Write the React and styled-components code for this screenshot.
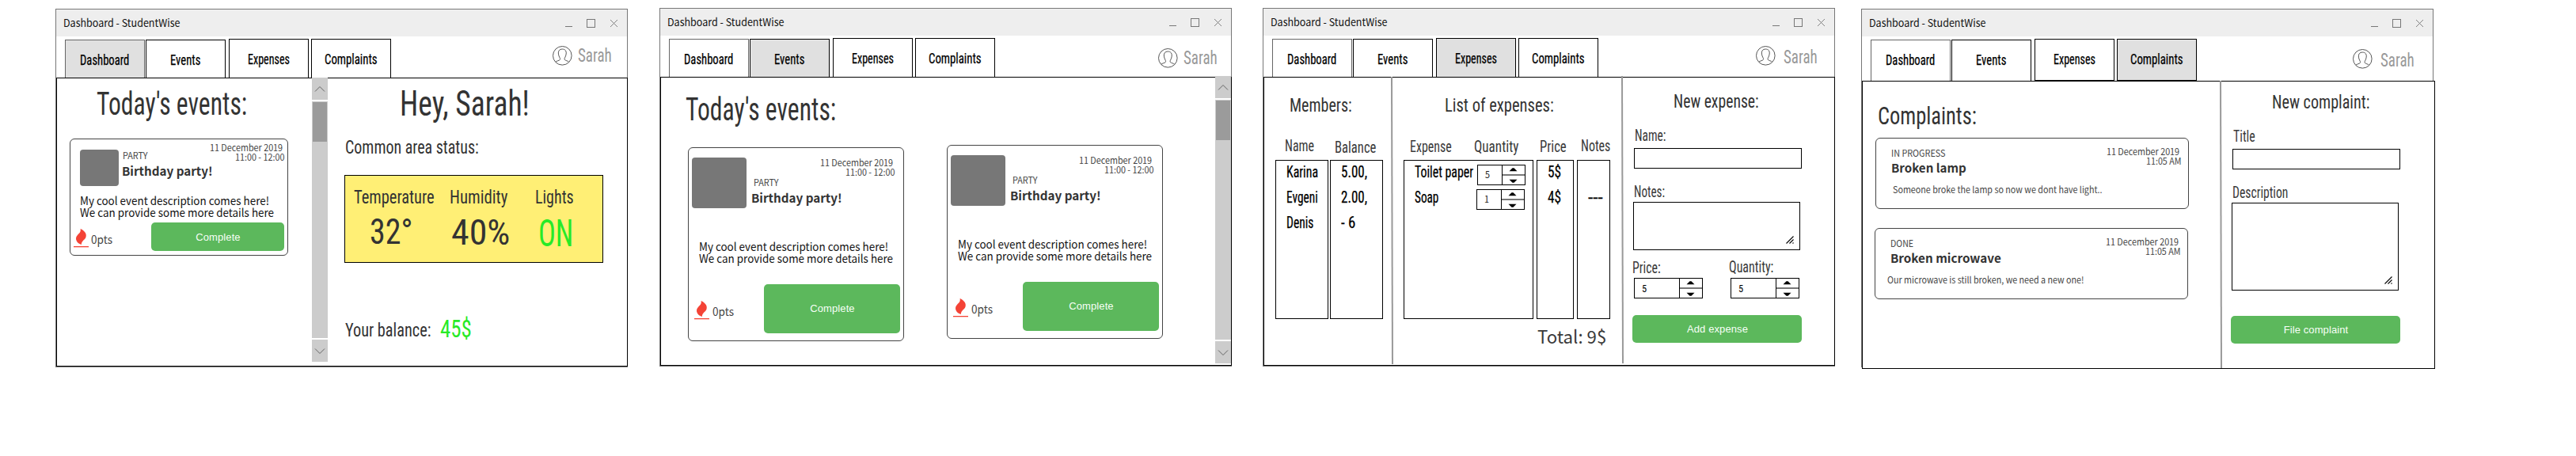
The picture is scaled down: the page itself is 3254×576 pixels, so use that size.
import React, { useLayoutEffect, useRef, useState } from "react";
import styled, { createGlobalStyle, css } from "styled-components";

const GlobalStyle = createGlobalStyle`
  * { box-sizing: border-box; }
  body { margin: 0; background: #fff; overflow: hidden; }
`;

const px = (n = 0) => `${n}px`;

/* ---------- text ---------- */

const condensed = css`
  font-family: Roboto, "Open Sans", sans-serif;
  font-stretch: 75%;
  --lift: 0;
`;
const humanist = css`
  font-family: "Noto Sans CJK SC", "Noto Sans", sans-serif;
  --lift: -0.07em;
`;

const Glyphs = styled.span`
  display: inline-block;
  margin-left: -0.04em;
  transform-origin: 0 50%;
  translate: 0 var(--lift);
`;

const TextBox = styled.div`
  flex: none;
  width: ${(p) => px(p.$w)};
  margin: ${(p) => px(p.$mt)} ${(p) => px(p.$mr)} 0 ${(p) => px(p.$ml)};
  white-space: pre;
`;

/* Condenses its text horizontally so that it fills the width of its box. */
function Fit({ as: Box, w, mt, ml, mr, children, ...rest }) {
  const ref = useRef(null);
  const [scale, setScale] = useState(1);
  useLayoutEffect(() => {
    const el = ref.current;
    const size = parseFloat(getComputedStyle(el).fontSize);
    el.style.transform = "none";
    const natural = el.getBoundingClientRect().width;
    const next = (w + size * 0.07) / natural;
    el.style.transform = `scaleX(${next})`;
    setScale(next);
  }, [w, children]);
  return (
    <Box $w={w} $mt={mt} $ml={ml} $mr={mr} {...rest}>
      <Glyphs ref={ref} style={{ transform: `scaleX(${scale})` }}>
        {children}
      </Glyphs>
    </Box>
  );
}

const Greeting = styled(TextBox)`
  ${condensed}
  font-size: 45px;
  line-height: 40px;
  color: #333;
`;
const PageTitle = styled(TextBox)`
  ${condensed}
  font-size: 40px;
  line-height: 36px;
  color: #333;
`;
const ListTitle = styled(TextBox)`
  ${condensed}
  font-size: 32px;
  line-height: 30px;
  color: #333;
`;
const SectionTitle = styled(TextBox)`
  ${condensed}
  font-size: 24px;
  line-height: 24px;
  color: #333;
`;
const FieldLabel = styled(TextBox)`
  ${condensed}
  font-size: 19.5px;
  line-height: 20px;
  color: #3a3a3a;
`;
const Cell = styled(FieldLabel)`
  color: #000;
  -webkit-text-stroke: 0.25px #000;
`;
const TabLabel = styled(TextBox)`
  ${condensed}
  font-size: 19px;
  line-height: 20px;
  color: #000;
  -webkit-text-stroke: 0.25px #000;
`;
const StatValue = styled(TextBox)`
  ${condensed}
  font-size: ${(p) => (p.$on ? 49 : 44)}px;
  line-height: 36px;
  color: ${(p) => (p.$on ? "#27ea27" : "#333")};
`;
const Amount = styled(TextBox)`
  ${condensed}
  font-size: 31px;
  line-height: 30px;
  color: #27ea27;
`;
const UserName = styled(SectionTitle)`
  color: #999;
`;

const WindowTitle = styled(TextBox)`
  ${humanist}
  font-size: 13.6px;
  line-height: 20px;
  color: #111;
`;
const Small = styled(TextBox)`
  ${humanist}
  font-size: 11.4px;
  line-height: 12px;
  color: #444;
`;
const Note = styled(Small)`
  line-height: 14px;
`;
const CardTitle = styled(TextBox)`
  ${humanist}
  font-size: 15px;
  font-weight: 700;
  line-height: 20px;
  color: #333;
`;
const Body = styled(TextBox)`
  ${humanist}
  font-size: 14.2px;
  line-height: 15px;
  color: #111;
`;
const Points = styled(TextBox)`
  ${humanist}
  font-size: 14.5px;
  line-height: 14px;
  color: #444;
`;
const Total = styled(TextBox)`
  ${humanist}
  font-size: 22.5px;
  line-height: 26px;
  color: #3a3a3a;
`;

/* ---------- window ---------- */

const Board = styled.main`
  display: flex;
  align-items: flex-start;
  width: 3254px;
  height: 576px;
  padding: 10px 0 0 70px;
`;
const Frame = styled.section`
  flex: none;
  display: flex;
  flex-direction: column;
  width: 723px;
  height: 453px;
  margin: ${(p) => px(p.$mt)} ${(p) => px(p.$gap)} 0 0;
  border: 1px solid #777;
`;
const TitleBar = styled.header`
  flex: none;
  display: flex;
  align-items: center;
  justify-content: space-between;
  height: 34px;
  padding: 0 11px 0 9.5px;
  background: #eee;
`;
const Controls = styled.div`
  display: flex;
  align-items: center;
  gap: 18px;
`;
const Toolbar = styled.nav`
  flex: none;
  display: flex;
  height: ${(p) => p.$h}px;
  padding-left: 11px;
`;
const Tab = styled.div`
  display: flex;
  justify-content: center;
  width: 101px;
  margin: ${(p) => px(p.$mt)} 0 0 ${(p) => px(p.$ml)};
  padding-top: 15px;
  border: 1px solid ${(p) => (p.$soft ? "#666" : "#000")};
  border-bottom-width: ${(p) => (p.$closed ? 1 : 0)}px;
  background: ${(p) => (p.$active ? "#e0e0e0" : "#fff")};
`;
const User = styled.div`
  display: flex;
  align-items: flex-start;
  gap: ${(p) => p.$gap}px;
  margin: 0 ${(p) => p.$mr}px 0 auto;
`;
const Avatar = styled.svg`
  display: block;
  margin-top: ${(p) => p.$mt}px;
`;
const Panel = styled.div`
  flex: none;
  position: relative;
  display: flex;
  width: ${(p) => p.$w}px;
  height: ${(p) => p.$h}px;
  border: 1px solid #000;
  background: #fff;
`;

const tabs = [
  { name: "Dashboard", w: 61, mt: 4, ml: 0 },
  { name: "Events", w: 37, mt: 4, ml: 1 },
  { name: "Expenses", w: 51.6, mt: 3, ml: 4 },
  { name: "Complaints", w: 65.3, mt: 3, ml: 3 },
];

function Window({ active, mt, gap, toolbar = 52, panel = [722, 365], user, children }) {
  return (
    <Frame $mt={mt} $gap={gap}>
      <TitleBar>
        <Fit as={WindowTitle} w={146.5}>Dashboard - StudentWise</Fit>
        <Controls>
          <svg width="9" height="11"><path d="M0 9.5h9" stroke="#777" /></svg>
          <svg width="11" height="11"><rect x=".5" y=".5" width="10" height="10" fill="none" stroke="#777" /></svg>
          <svg width="11" height="11"><path d="M1 1l9 9M10 1l-9 9" stroke="#777" strokeWidth=".9" /></svg>
        </Controls>
      </TitleBar>
      <Toolbar $h={toolbar}>
        {tabs.map((t, i) => (
          <Tab
            key={t.name}
            $mt={t.mt}
            $ml={t.ml}
            $soft={i === 0}
            $active={t.name === active}
            $closed={toolbar > 52 && i > 1}
          >
            <Fit as={TabLabel} w={t.w}>{t.name}</Fit>
          </Tab>
        ))}
        <User $gap={user.gap} $mr={user.mr}>
          <Avatar $mt={user.iconTop} width="25" height="25" viewBox="0 0 25 25" fill="none" stroke="#555">
            <circle cx="12.3" cy="12.3" r="11.8" />
            <path d="M3.9 20.2c1.2-1.3 4.6-1.6 5.4-2.8.8-1.4-.5-2.6-1.2-4.6-.9-2.6-1.2-5.3.2-7.1 1.6-2.2 6.4-2.2 8 0 1.4 1.8 1.1 4.5.2 7.1-.7 2-2 3.2-1.2 4.6.8 1.2 4.2 1.5 5.4 2.8" />
          </Avatar>
          <Fit as={UserName} w={41} mt={user.textTop}>Sarah</Fit>
        </User>
      </Toolbar>
      <Panel $w={panel[0]} $h={panel[1]}>{children}</Panel>
    </Frame>
  );
}

/* ---------- shared parts ---------- */

const Pane = styled.div`
  flex: none;
  display: flex;
  flex-direction: column;
  align-items: flex-start;
  width: ${(p) => (p.$w ? px(p.$w) : "auto")};
`;
const Row = styled.div`
  display: flex;
  align-items: flex-start;
  margin: ${(p) => px(p.$mt)} 0 0 ${(p) => px(p.$ml)};
  gap: ${(p) => px(p.$gap)};
`;
const Divider = styled.div`
  flex: none;
  width: 2px;
  height: 363px;
  margin-top: ${(p) => px(p.$mt)};
  background: #999;
  transform: skewX(0.158deg);
  transform-origin: 0 0;
`;
const Button = styled.button`
  flex: none;
  width: ${(p) => p.$w}px;
  height: ${(p) => p.$h}px;
  margin: ${(p) => px(p.$mt)} ${(p) => px(p.$mr)} 0 ${(p) => px(p.$ml)};
  padding: 0 0 0 1px;
  border: 0;
  border-radius: 5px;
  background: #5cb85c;
  color: #f7fff7;
  font: 13px "Liberation Sans", sans-serif;
  letter-spacing: 0.1px;
`;

const ScrollColumn = styled.div`
  flex: none;
  display: flex;
  flex-direction: column;
  gap: 2px;
  width: 20px;
  height: ${(p) => p.$h}px;
  margin-top: ${(p) => p.$mt}px;
  background: #fff;
`;
const ScrollButton = styled.div`
  flex: none;
  display: grid;
  place-items: center;
  height: 28px;
  background: #ccc;
`;
const Track = styled.div`
  flex: 1;
  padding: 1px;
  background: #ccc;
`;
const Thumb = styled.div`
  height: 50px;
  background: #9b9b9b;
`;

function Scrollbar({ h, mt }) {
  return (
    <ScrollColumn $h={h} $mt={mt}>
      <ScrollButton>
        <svg width="14" height="9" fill="none" stroke="#666"><path d="M1 7.5l6-6 6 6" /></svg>
      </ScrollButton>
      <Track><Thumb /></Track>
      <ScrollButton>
        <svg width="14" height="9" fill="none" stroke="#666"><path d="M1 1.5l6 6 6-6" /></svg>
      </ScrollButton>
    </ScrollColumn>
  );
}

/* ---------- event cards ---------- */

const CardFrame = styled.article`
  flex: none;
  display: flex;
  flex-direction: column;
  width: ${(p) => p.$w}px;
  height: ${(p) => p.$h}px;
  margin: ${(p) => px(p.$mt)} 0 0 ${(p) => px(p.$ml)};
  border: 1px solid #444;
  border-radius: 6px;
  background: #fff;
`;
const CardHead = styled.div`
  display: flex;
  align-items: flex-start;
  height: ${(p) => p.$h}px;
`;
const Picture = styled.div`
  flex: none;
  width: ${(p) => p.$size[0]}px;
  height: ${(p) => p.$size[1]}px;
  margin: ${(p) => px(p.$mt)} 0 0 ${(p) => px(p.$ml)};
  border-radius: 4px;
  background: #777;
`;
const Meta = styled.div`
  flex: 1;
  padding: ${(p) => px(p.$pt)} ${(p) => px(p.$pr)} 0 ${(p) => px(p.$pl)};
`;
const MetaRow = styled.div`
  display: flex;
  justify-content: space-between;
`;
const Dates = styled.div`
  display: flex;
  flex-direction: column;
  align-items: flex-end;
`;
const Description = styled.div`
  margin: ${(p) => px(p.$mt)} 0 0 ${(p) => px(p.$ml)};
  height: ${(p) => p.$h}px;
`;
const CardFoot = styled.div`
  display: flex;
  align-items: flex-start;
  padding-right: 4px;
  margin-top: ${(p) => p.$mt}px;
`;
const Flame = styled.svg`
  flex: none;
  display: block;
  margin: ${(p) => px(p.$mt)} 0 0 ${(p) => px(p.$ml)};
`;

const compact = {
  size: [276, 148], head: 59, picture: { size: [49, 46], mt: 13, ml: 12 },
  meta: [5.2, 4.3, 5], kind: [10.1, 0.7], title: [2.1, 0],
  desc: [11.5, 13, 28.5], foot: 6, flame: [8, 4], points: [14.8, 3.3], button: [168, 36],
};
const roomy = {
  size: [273, 245], head: 76, picture: { size: [69, 64], mt: 12, ml: 4 },
  meta: [13, 11.3, 6.7], kind: [25.3, 3], title: [4, 0],
  desc: [41.7, 13.3, 32], foot: 22.3, flame: [21, 7], points: [28.5, 4.3], button: [172, 62],
};

function EventCard({ look, mt, ml }) {
  return (
    <CardFrame $w={look.size[0]} $h={look.size[1]} $mt={mt} $ml={ml}>
      <CardHead $h={look.head}>
        <Picture $size={look.picture.size} $mt={look.picture.mt} $ml={look.picture.ml} />
        <Meta $pt={look.meta[0]} $pr={look.meta[1]} $pl={look.meta[2]}>
          <MetaRow>
            <Fit as={Small} w={30.7} mt={look.kind[0]} ml={look.kind[1]}>PARTY</Fit>
            <Dates>
              <Fit as={Small} w={91.3} mr={2.2}>11 December 2019</Fit>
              <Fit as={Small} w={61.7}>11:00 - 12:00</Fit>
            </Dates>
          </MetaRow>
          <Fit as={CardTitle} w={113.5} mt={look.title[0]}>Birthday party!</Fit>
        </Meta>
      </CardHead>
      <Description $mt={look.desc[0]} $ml={look.desc[1]} $h={look.desc[2]}>
        <Fit as={Body} w={238}>My cool event description comes here!</Fit>
        <Fit as={Body} w={244}>We can provide some more details here</Fit>
      </Description>
      <CardFoot $mt={look.foot}>
        <Flame $mt={look.flame[0]} $ml={look.flame[1]} width="19" height="24" viewBox="0 0 19 24" fill="#f44336">
          <path d="M8.6 0C13 2 17 5.500 15.500 10.500 14.500 13.800 10 15 9.800 20 5 18.500 2 14.500 3.300 10.500 4.800 6.500 9.800 5.500 8.600 0Z" />
          <rect y="22" width="19" height="1.300" />
        </Flame>
        <Fit as={Points} w={26} mt={look.points[0]} ml={look.points[1]}>0pts</Fit>
        <Button $w={look.button[0]} $h={look.button[1]} $ml={look.size[0] - 2 - 4 - look.button[0] - 19 - 26 - look.flame[1] - look.points[1]}>
          Complete
        </Button>
      </CardFoot>
    </CardFrame>
  );
}

/* ---------- dashboard ---------- */

const Status = styled.div`
  display: flex;
  align-items: flex-start;
  width: 327px;
  height: 111px;
  margin: 22.8px 0 0 21px;
  padding: 15.2px 0 0 12.3px;
  border: 1px solid #000;
  background: #ffef75;
`;
const Stat = styled.div`
  width: ${(p) => p.$w}px;
`;

function Dashboard() {
  return (
    <Window active="Dashboard" mt={1} gap={40} user={{ gap: 8.3, mr: 19.7, iconTop: 12, textTop: 11.8 }}>
      <Pane $w={322}>
        <Fit as={PageTitle} w={187.4} mt={14.5} ml={51.3}>Today's events:</Fit>
        <EventCard look={compact} mt={25.5} ml={16} />
      </Pane>
      <Scrollbar h={359} mt={-1} />
      <Pane>
        <Fit as={Greeting} w={160.7} mt={11.5} ml={92.7}>Hey, Sarah!</Fit>
        <Fit as={SectionTitle} w={167} mt={23.7} ml={22.7}>Common area status:</Fit>
        <Status>
          <Stat $w={121}>
            <Fit as={SectionTitle} w={100}>Temperature</Fit>
            <Fit as={StatValue} w={51.3} mt={14.3} ml={20.7}>32°</Fit>
          </Stat>
          <Stat $w={107.7}>
            <Fit as={SectionTitle} w={71.7}>Humidity</Fit>
            <Fit as={StatValue} w={71.3} mt={14.8} ml={2}>40%</Fit>
          </Stat>
          <Stat $w={60}>
            <Fit as={SectionTitle} w={47}>Lights</Fit>
            <Fit as={StatValue} $on w={41} mt={16.3} ml={4.7}>ON</Fit>
          </Stat>
        </Status>
        <Row $mt={69}>
          <Fit as={SectionTitle} w={106.7} mt={4.2} ml={22.7}>Your balance:</Fit>
          <Fit as={Amount} w={37.7} ml={13.4}>45$</Fit>
        </Row>
      </Pane>
    </Window>
  );
}

/* ---------- events ---------- */

function Events() {
  return (
    <Window active="Events" gap={39} user={{ gap: 8.3, mr: 17.7, iconTop: 16, textTop: 15.7 }}>
      <Pane $w={700}>
        <Fit as={PageTitle} w={187.4} mt={22.5} ml={32.7}>Today's events:</Fit>
        <Row $mt={26.5} $ml={34} $gap={54}>
          <EventCard look={roomy} mt={3} />
          <EventCard look={roomy} />
        </Row>
      </Pane>
      <Scrollbar h={363} mt={-2} />
    </Window>
  );
}

/* ---------- forms and tables ---------- */

const Field = styled.div`
  display: flex;
  align-items: flex-end;
  justify-content: flex-end;
  width: ${(p) => p.$w}px;
  height: ${(p) => p.$h}px;
  margin: ${(p) => px(p.$mt)} 0 0 ${(p) => px(p.$ml)};
  padding: 7px;
  border: 1px solid #000;
`;
const Grip = () => (
  <svg width="10" height="10" stroke="#000" strokeWidth="1.1">
    <path d="M.5 9.5l9-9M4.5 9.5l5-5M8.5 9.5l1-1" />
  </svg>
);

const Stepper = styled.div`
  flex: none;
  display: flex;
  width: ${(p) => p.$w}px;
  height: 26px;
  margin: ${(p) => px(p.$mt)} ${(p) => px(p.$mr)} 0 ${(p) => px(p.$ml)};
  border: 1px solid #000;
`;
const StepperValue = styled.div`
  flex: 1;
`;
const StepperArrows = styled.div`
  width: 29px;
  border-left: 1px solid #000;
`;
const Digit = styled(TextBox)`
  ${humanist}
  font-size: 11.4px;
  line-height: 24px;
  color: #222;
`;
const CondensedDigit = styled(TextBox)`
  ${condensed}
  font-size: 13.5px;
  line-height: 24px;
  color: #000;
`;

function Spinner({ value, w, mt, ml, mr, digit = CondensedDigit }) {
  return (
    <Stepper $w={w} $mt={mt} $ml={ml} $mr={mr}>
      <StepperValue><Fit as={digit} w={5.2} ml={9.5}>{value}</Fit></StepperValue>
      <StepperArrows>
        <svg width="28" height="24" display="block">
          <path d="M8.5 7.3l4-4h2l4 4zM8.5 17.7l4 4h2l4-4z" />
          <rect y="11" width="28" height="2" fill="#777" />
        </svg>
      </StepperArrows>
    </Stepper>
  );
}

const ColumnHead = styled.div`
  display: flex;
  height: 56.8px;
  padding: ${(p) => p.$pt}px 0 0 ${(p) => p.$pl}px;
`;
const ColumnBox = styled.div`
  display: flex;
  flex-direction: column;
  gap: 12px;
  width: ${(p) => p.$w}px;
  height: 201px;
  padding: 5.3px 0 0 13.3px;
  border: 1px solid #000;
`;
const ItemsBox = styled(ColumnBox)`
  gap: 5px;
  padding-top: 5px;
`;
const ItemRow = styled.div`
  display: flex;
  justify-content: space-between;
  height: 26px;
`;

function Column({ w, pt, pl, heading, headingWidth, rows }) {
  return (
    <div>
      <ColumnHead $pt={pt} $pl={pl}><Fit as={FieldLabel} w={headingWidth}>{heading}</Fit></ColumnHead>
      <ColumnBox $w={w}>
        {rows.map(([text, width], i) => <Fit key={i} as={Cell} w={width}>{text}</Fit>)}
      </ColumnBox>
    </div>
  );
}

function Expenses() {
  return (
    <Window active="Expenses" gap={33} user={{ gap: 11.3, mr: 21.7, iconTop: 13, textTop: 14.7 }}>
      <Pane $w={160}>
        <Fit as={SectionTitle} w={77} mt={23.2} ml={32.7}>Members:</Fit>
        <Row $ml={14} $gap={2}>
          <Column w={67} pt={30.3} pl={12.7} heading="Name" headingWidth={35.7}
            rows={[["Karina", 38.7], ["Evgeni", 38.3], ["Denis", 33]]} />
          <Column w={67} pt={31.6} pl={6.3} heading="Balance" headingWidth={51}
            rows={[["5.00,", 31.7], ["2.00,", 31.7], ["- 6", 17]]} />
        </Row>
      </Pane>
      <Divider $mt={-1} />
      <Pane $w={289}>
        <Fit as={SectionTitle} w={136} mt={23.2} ml={66.7}>List of expenses:</Fit>
        <Row $ml={14} $gap={4}>
          <div>
            <ColumnHead $pt={30.5} $pl={8.7}>
              <Fit as={FieldLabel} w={51.3}>Expense</Fit>
              <Fit as={FieldLabel} w={55} ml={29.3}>Quantity</Fit>
            </ColumnHead>
            <ItemsBox $w={164}>
              <ItemRow>
                <Fit as={Cell} w={72.7} mt={0.3}>Toilet paper</Fit>
                <Spinner value="5" w={61} mr={9} digit={Digit} />
              </ItemRow>
              <ItemRow>
                <Fit as={Cell} w={29} mt={1.3}>Soap</Fit>
                <Spinner value="1" w={61} mr={10} digit={Digit} />
              </ItemRow>
            </ItemsBox>
          </div>
          <Column w={47} pt={30.5} pl={4.7} heading="Price" headingWidth={32.3}
            rows={[["5$", 15.7], ["4$", 15.7]]} />
          <Column w={42} pt={29.5} pl={5.7} heading="Notes" headingWidth={36}
            rows={[[" ", 10], ["---", 17.3]]} />
        </Row>
        <Fit as={Total} w={85.7} mt={10.5} ml={184}>Total: 9$</Fit>
      </Pane>
      <Divider $mt={-2} />
      <Pane>
        <Fit as={SectionTitle} w={106} mt={18.3} ml={65}>New expense:</Fit>
        <Fit as={FieldLabel} w={38} mt={22} ml={15.3}>Name:</Fit>
        <Field $w={212} $h={26} $mt={4.7} $ml={14} />
        <Fit as={FieldLabel} w={37.7} mt={20.5} ml={14.7}>Notes:</Fit>
        <Field $w={211} $h={61} $mt={1.5} $ml={13}><Grip /></Field>
        <Row $mt={13} $ml={14} $gap={35}>
          <div>
            <Fit as={FieldLabel} w={34.3} ml={-1.3}>Price:</Fit>
            <Spinner value="5" w={87} mt={2} />
          </div>
          <div>
            <Fit as={FieldLabel} w={55} mt={-0.8} ml={-1.3}>Quantity:</Fit>
            <Spinner value="5" w={87} mt={2.8} />
          </div>
        </Row>
        <Button $w={214} $h={35} $mt={21} $ml={12}>Add expense</Button>
      </Pane>
    </Window>
  );
}

/* ---------- complaints ---------- */

const ComplaintFrame = styled(CardFrame)`
  flex-direction: row;
  justify-content: space-between;
  padding: 11.2px 9.3px 0 0;
`;

function ComplaintCard({ mt, ml, status, title, text, left }) {
  return (
    <ComplaintFrame $w={396} $h={90} $mt={mt} $ml={ml}>
      <div>
        <Fit as={Small} w={status[1]} mt={2} ml={19.5}>{status[0]}</Fit>
        <Fit as={CardTitle} w={title[1]} mt={3.3} ml={19.7}>{title[0]}</Fit>
        <Fit as={Note} w={text[1]} mt={9.8} ml={left}>{text[0]}</Fit>
      </div>
      <Dates>
        <Fit as={Small} w={91.3} mr={2.2}>11 December 2019</Fit>
        <Fit as={Small} w={43.7}>11:05 AM</Fit>
      </Dates>
    </ComplaintFrame>
  );
}

function Complaints() {
  return (
    <Window active="Complaints" mt={1} toolbar={56} panel={[724, 364]}
      user={{ gap: 11.3, mr: 23.7, iconTop: 16, textTop: 17.7 }}>
      <Pane $w={451}>
        <Fit as={ListTitle} w={122.7} mt={27.5} ml={20}>Complaints:</Fit>
        <ComplaintCard mt={13.5} ml={16} left={21.3} status={["IN PROGRESS", 67.7]}
          title={["Broken lamp", 93.7]} text={["Someone broke the lamp so now we dont have light..", 263.7]} />
        <ComplaintCard mt={24} ml={15} left={15.3} status={["DONE", 28.3]}
          title={["Broken microwave", 138.7]} text={["Our microwave is still broken, we need a new one!", 247.7]} />
      </Pane>
      <Divider $mt={-1} />
      <Pane>
        <Fit as={SectionTitle} w={121.7} mt={14.2} ml={64.7}>New complaint:</Fit>
        <Fit as={FieldLabel} w={26.3} mt={22} ml={15.3}>Title</Fit>
        <Field $w={212} $h={26} $mt={4.8} $ml={14} />
        <Fit as={FieldLabel} w={69} mt={20.3} ml={14.7}>Description</Fit>
        <Field $w={211} $h={111} $mt={1.7} $ml={13}><Grip /></Field>
        <Button $w={214} $h={35} $mt={32} $ml={12}>File complaint</Button>
      </Pane>
    </Window>
  );
}

export default function App() {
  return (
    <>
      <GlobalStyle />
      <Board>
        <Dashboard />
        <Events />
        <Expenses />
        <Complaints />
      </Board>
    </>
  );
}
